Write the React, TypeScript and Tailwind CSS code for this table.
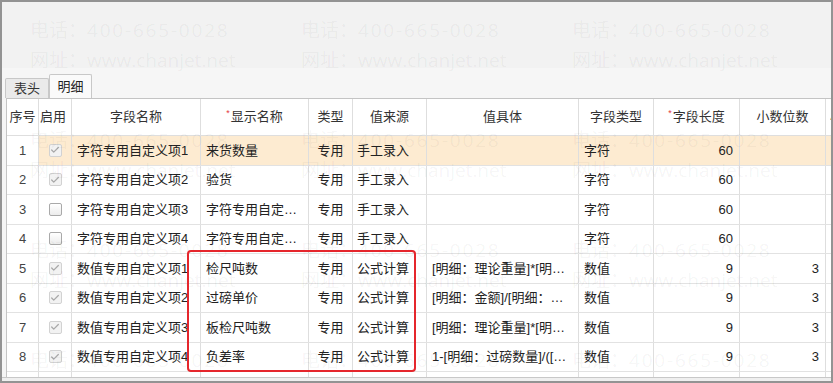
import { Check } from 'lucide-react';

interface Row {
  no: number;
  enabled: boolean;
  field: string;
  display: string;
  kind: string;
  source: string;
  formula: string;
  dataType: string;
  length: string;
  decimals: string;
}

const rows: Row[] = [
  { no: 1, enabled: true, field: '字符专用自定义项1', display: '来货数量', kind: '专用', source: '手工录入', formula: '', dataType: '字符', length: '60', decimals: '' },
  { no: 2, enabled: true, field: '字符专用自定义项2', display: '验货', kind: '专用', source: '手工录入', formula: '', dataType: '字符', length: '60', decimals: '' },
  { no: 3, enabled: false, field: '字符专用自定义项3', display: '字符专用自定义项3', kind: '专用', source: '手工录入', formula: '', dataType: '字符', length: '60', decimals: '' },
  { no: 4, enabled: false, field: '字符专用自定义项4', display: '字符专用自定义项4', kind: '专用', source: '手工录入', formula: '', dataType: '字符', length: '60', decimals: '' },
  { no: 5, enabled: true, field: '数值专用自定义项1', display: '检尺吨数', kind: '专用', source: '公式计算', formula: '[明细：理论重量]*[明细：检尺吨数]', dataType: '数值', length: '9', decimals: '3' },
  { no: 6, enabled: true, field: '数值专用自定义项2', display: '过磅单价', kind: '专用', source: '公式计算', formula: '[明细：金额]/[明细：过磅数量]', dataType: '数值', length: '9', decimals: '3' },
  { no: 7, enabled: true, field: '数值专用自定义项3', display: '板检尺吨数', kind: '专用', source: '公式计算', formula: '[明细：理论重量]*[明细：板检尺吨数]', dataType: '数值', length: '9', decimals: '3' },
  { no: 8, enabled: true, field: '数值专用自定义项4', display: '负差率', kind: '专用', source: '公式计算', formula: '1-[明细：过磅数量]/([明细：理论重量])', dataType: '数值', length: '9', decimals: '3' },
];

const cell = 'flex items-center shrink-0 overflow-hidden whitespace-nowrap border-r border-[#dedede] px-[5px]';

function CheckBox({ checked }: { checked: boolean }) {
  if (checked) {
    return (
      <div className="w-[13px] h-[13px] rounded-[2px] border border-[#d2d2d2] bg-[#f2f2f2] flex items-center justify-center">
        <Check className="w-[10px] h-[10px] text-[#a8a8a8]" strokeWidth={3} />
      </div>
    );
  }
  return (
    <div className="w-[13px] h-[13px] rounded-[2px] border border-[#a9a9a9] bg-gradient-to-b from-[#ffffff] to-[#ececec]" />
  );
}

function Star() {
  return <span className="text-[#e4393c] text-[9px] relative -top-[3px] mr-px">*</span>;
}

function HeaderRow() {
  return (
    <div className="flex h-[37px] border-b border-[#dedede] text-[#333]">
      <div className={`${cell} w-[32px] justify-center px-0`}>序号</div>
      <div className={`${cell} w-[33px] justify-start px-0 pl-px`}>启用</div>
      <div className={`${cell} w-[129px] justify-center`}>字段名称</div>
      <div className={`${cell} w-[108px] justify-center`}>
        <Star />
        显示名称
      </div>
      <div className={`${cell} w-[44px] justify-center`}>类型</div>
      <div className={`${cell} w-[74px] justify-center`}>值来源</div>
      <div className={`${cell} w-[152px] justify-center`}>值具体</div>
      <div className={`${cell} w-[75px] justify-center`}>字段类型</div>
      <div className={`${cell} w-[86px] justify-center`}>
        <Star />
        字段长度
      </div>
      <div className={`${cell} w-[86px] justify-center`}>小数位数</div>
      <div className={`${cell} w-[80px] justify-start pl-[4px]`}>小数精度</div>
    </div>
  );
}

function DataRow({ row }: { row: Row }) {
  const hl = row.no === 1 ? 'bg-[#fdebd1]' : '';
  return (
    <div className="flex h-[29.5px] border-b border-[#e2e2e2] text-[#222]">
      <div className={`${cell} w-[32px] justify-center px-0 text-[#444]`}>{row.no}</div>
      <div className={`${cell} w-[33px] justify-center px-0 ${hl}`}>
        <CheckBox checked={row.enabled} />
      </div>
      <div className={`${cell} w-[129px] ${hl}`}>
        <span className="truncate">{row.field}</span>
      </div>
      <div className={`${cell} w-[108px] ${hl}`}>
        <span className="truncate">{row.display}</span>
      </div>
      <div className={`${cell} w-[44px] justify-center ${hl}`}>{row.kind}</div>
      <div className={`${cell} w-[74px] pl-[4px] ${hl}`}>{row.source}</div>
      <div className={`${cell} w-[152px] ${hl}`}>
        <span className="truncate">{row.formula}</span>
      </div>
      <div className={`${cell} w-[75px] ${hl}`}>{row.dataType}</div>
      <div className={`${cell} w-[86px] justify-end pr-[6px] ${hl}`}>{row.length}</div>
      <div className={`${cell} w-[86px] justify-end pr-[6px] ${hl}`}>{row.decimals}</div>
      <div className={`${cell} w-[80px] ${hl}`} />
    </div>
  );
}

function EmptyRow() {
  return (
    <div className="flex h-[29.5px]">
      <div className={`${cell} w-[32px]`} />
      <div className={`${cell} w-[33px]`} />
      <div className={`${cell} w-[129px]`} />
      <div className={`${cell} w-[108px]`} />
      <div className={`${cell} w-[44px]`} />
      <div className={`${cell} w-[74px]`} />
      <div className={`${cell} w-[152px]`} />
      <div className={`${cell} w-[75px]`} />
      <div className={`${cell} w-[86px]`} />
      <div className={`${cell} w-[86px]`} />
      <div className={`${cell} w-[80px]`} />
    </div>
  );
}

function Watermark() {
  const blocks = Array.from({ length: 16 });
  return (
    <div className="absolute inset-0 pointer-events-none z-10 pl-[28px] pt-[13px] grid grid-cols-[repeat(4,271px)] auto-rows-[110px] font-['Open_Sans','Noto_Sans_CJK_SC',sans-serif] text-[19px] text-[rgba(0,0,0,0.05)]">
      {blocks.map((_, i) => (
        <div key={i} className="flex flex-col whitespace-nowrap">
          <div className="leading-[30px]">
            电话：<span className="tracking-[1.8px]">400-665-0028</span>
          </div>
          <div className="leading-[30px]">
            网址：<span>www.chanjet.net</span>
          </div>
        </div>
      ))}
    </div>
  );
}

export default function App() {
  return (
    <div className="relative w-[833px] h-[383px] overflow-hidden border-2 border-[#939393] bg-[#f5f5f5] text-[13px] font-['Liberation_Sans','Noto_Sans_CJK_SC',sans-serif]">
      {/* 顶部空白区 */}
      <div className="h-[66px] bg-[#f2f2f2]" />
      <div className="h-[6px] bg-[#f6f6f6]" />

      {/* 页签 */}
      <div className="flex items-end h-[24px] pl-[3px] bg-[#f6f6f6]">
        <div className="w-[44px] h-[20px] flex items-center justify-center border border-b-0 border-[#c8c8c8] bg-[#eaeaea] text-[#333] rounded-t-[2px]">
          表头
        </div>
        <div className="w-[43px] h-[24px] flex items-center justify-center border border-b-0 border-[#c8c8c8] bg-[#fafafa] text-[#222] rounded-t-[2px]">
          明细
        </div>
      </div>

      {/* 明细表格 */}
      <div className="ml-[4px] h-[279px] bg-white border-t border-l border-[#c4c4c4] overflow-hidden">
        <HeaderRow />
        {rows.map((row) => (
          <DataRow key={row.no} row={row} />
        ))}
        <EmptyRow />
      </div>

      {/* 底部滚动条区 */}
      <div className="h-[4px] border-t border-[#c8c8c8] bg-[#efefef]" />

      <Watermark />

      {/* 标注框 */}
      <div className="absolute left-[185px] top-[248px] w-[229px] h-[122px] border-[2.5px] border-[#e5262c] rounded-[4px] z-20 pointer-events-none" />
    </div>
  );
}
